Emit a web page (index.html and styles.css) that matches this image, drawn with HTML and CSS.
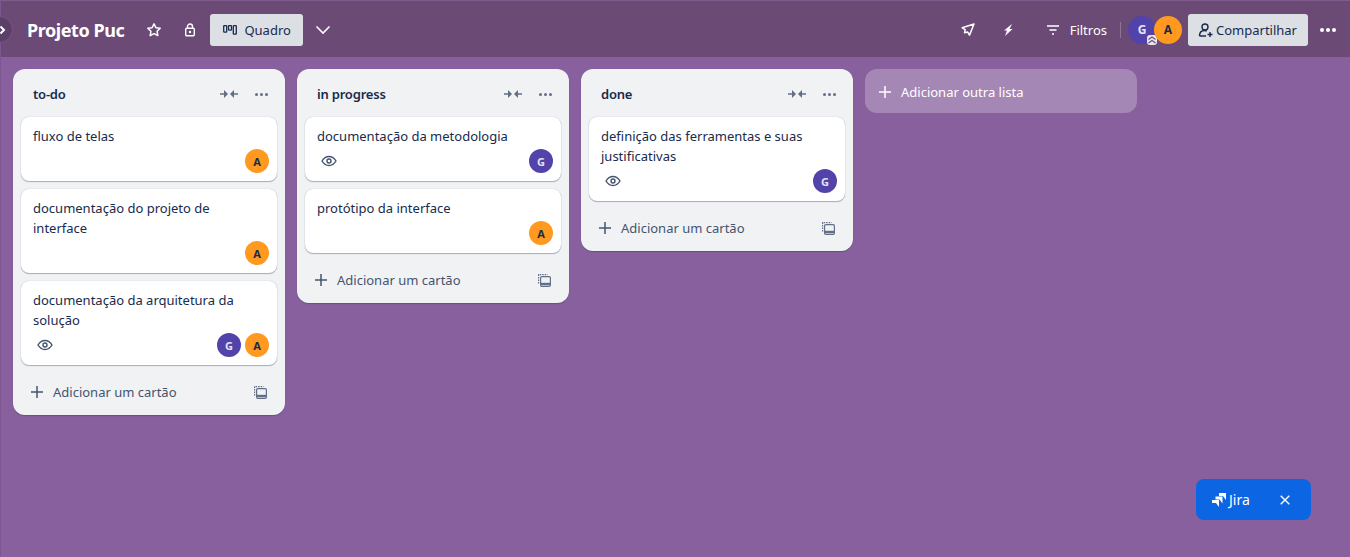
FILE: index.html
```html
<!DOCTYPE html>
<html lang="pt-BR">
<head>
  <meta charset="UTF-8" />
  <title>Projeto Puc</title>
  <link rel="stylesheet" href="styles.css">
</head>
<body>
<header class="board-bar">
  <button class="sidebar-toggle" aria-label="Expandir">
    <svg width="8" height="10" viewBox="0 0 8 10"><path d="M1.500 1.500 5 5 1.500 8.500" fill="none" stroke="#fff" stroke-width="2"/></svg>
  </button>
  <h1 class="board-title">Projeto Puc</h1>
  <span class="bar-icon star">
    <svg width="16" height="16" viewBox="0 0 16 16"><path d="M8 1.800l1.900 3.900 4.300.6-3.100 3 .7 4.300L8 11.600l-3.800 2 .7-4.300-3.100-3 4.300-.6z" fill="none" stroke="#fff" stroke-width="1.500" stroke-linejoin="round"/></svg>
  </span>
  <span class="bar-icon lock">
    <svg width="12" height="14" viewBox="0 0 12 14"><path d="M3.500 5V3.500a2.500 2.500 0 0 1 5 0V5" fill="none" stroke="#fff" stroke-width="1.400"/><rect x="1.700" y="5.200" width="8.600" height="7.600" rx="1" fill="none" stroke="#fff" stroke-width="1.400"/><circle cx="6" cy="9" r="1.200" fill="#fff"/></svg>
  </span>
  <button class="btn-light view-btn">
    <svg width="14" height="10" viewBox="0 0 14 10"><g fill="none" stroke="#172b4d" stroke-width="1.300"><rect x=".7" y=".7" width="3" height="6.500" rx=".6"/><rect x="5.500" y=".7" width="3" height="4.500" rx=".6"/><rect x="10.300" y=".7" width="3" height="8.500" rx=".6"/></g></svg>
    Quadro
  </button>
  <span class="bar-icon chevron">
    <svg width="16" height="10" viewBox="0 0 16 10"><path d="M1.500 1.500 8 8l6.500-6.500" fill="none" stroke="#fff" stroke-width="1.600"/></svg>
  </span>

  <div class="bar-right">
    <span class="bar-icon">
      <svg width="14" height="14" viewBox="0 0 14 14"><path d="M13 1 1.200 4.800l3 1.800-.7 3.200 3.200-.7 1.800 3z" fill="none" stroke="#fff" stroke-width="1.500" stroke-linejoin="round"/></svg>
    </span>
    <span class="bar-icon bolt">
      <svg width="10" height="12" viewBox="0 0 10 12"><path d="M9 0 1 6.500h3L2 12l7.500-7H6.500z" fill="#fff"/></svg>
    </span>
    <span class="bar-icon filter-icon">
      <svg width="12" height="10" viewBox="0 0 12 10"><path d="M0 1h12M2.500 5h7M5 9h2" stroke="#fff" stroke-width="1.400"/></svg>
    </span>
    <span class="filter-label">Filtros</span>
    <span class="bar-sep"></span>
    <div class="members">
      <span class="avatar avatar-g avatar-lg">G
        <span class="admin-badge">
          <svg width="10" height="10" viewBox="0 0 10 10"><path d="M1.500 4.500 5 2l3.500 2.500M1.500 8 5 5.500 8.500 8" fill="none" stroke="#6b4a76" stroke-width="1.100"/></svg>
        </span>
      </span>
      <span class="avatar avatar-a avatar-lg">A</span>
    </div>
    <button class="btn-light share-btn">
      <svg width="16" height="16" viewBox="0 0 16 16"><g fill="none" stroke="#172b4d" stroke-width="1.400"><circle cx="7" cy="5" r="3"/><path d="M1.500 14c0-3.500 2-5.500 5-5.500 1 0 1.600.2 2.200.5M1.500 14H8M12 10v5M9.500 12.500h5"/></g></svg>
      Compartilhar
    </button>
    <span class="dots dots-white"><i></i><i></i><i></i></span>
  </div>
</header>

<main class="board">
  <section class="list">
    <div class="list-head">
      <h2>to-do</h2>
      <span class="collapse-icon">
        <svg width="18" height="10" viewBox="0 0 18 10"><path d="M0 4.200h4V1l4 4-4 4V5.800H0zM18 4.200h-4V1l-4 4 4 4V5.800h4z" fill="#626f86"/></svg>
      </span>
      <span class="dots"><i></i><i></i><i></i></span>
    </div>
    <article class="card">
      <p>fluxo de telas</p>
      <div class="card-foot"><span class="avatar avatar-a">A</span></div>
    </article>
    <article class="card">
      <p>documentação do projeto de interface</p>
      <div class="card-foot"><span class="avatar avatar-a">A</span></div>
    </article>
    <article class="card">
      <p>documentação da arquitetura da solução</p>
      <div class="card-foot">
        <svg class="eye" width="16" height="12" viewBox="0 0 16 12"><path d="M1 6c1.800-3 4-4.500 7-4.500S13.200 3 15 6c-1.800 3-4 4.500-7 4.500S2.800 9 1 6z" fill="none" stroke="#44546f" stroke-width="1.400"/><circle cx="8" cy="6" r="2" fill="none" stroke="#44546f" stroke-width="1.400"/></svg>
        <span class="avatar avatar-g">G</span>
        <span class="avatar avatar-a">A</span>
      </div>
    </article>
    <div class="list-foot">
      <svg class="plus" width="12" height="12" viewBox="0 0 12 12"><path d="M6 0v12M0 6h12" stroke="#44546f" stroke-width="1.500"/></svg>
      <span>Adicionar um cartão</span>
      <svg class="template" width="13" height="13" viewBox="0 0 13 13"><g fill="none" stroke="#626f86" stroke-width="1.200"><path d="M.6 9.500V.6h9" stroke-dasharray="1.500 1"/><rect x="2.600" y="2.600" width="9.800" height="9.800" rx="1.200"/><path d="M3 10h9" stroke-width="2.400"/></g></svg>
    </div>
  </section>

  <section class="list">
    <div class="list-head">
      <h2>in progress</h2>
      <span class="collapse-icon">
        <svg width="18" height="10" viewBox="0 0 18 10"><path d="M0 4.200h4V1l4 4-4 4V5.800H0zM18 4.200h-4V1l-4 4 4 4V5.800h4z" fill="#626f86"/></svg>
      </span>
      <span class="dots"><i></i><i></i><i></i></span>
    </div>
    <article class="card">
      <p>documentação da metodologia</p>
      <div class="card-foot">
        <svg class="eye" width="16" height="12" viewBox="0 0 16 12"><path d="M1 6c1.800-3 4-4.500 7-4.500S13.200 3 15 6c-1.800 3-4 4.500-7 4.500S2.800 9 1 6z" fill="none" stroke="#44546f" stroke-width="1.400"/><circle cx="8" cy="6" r="2" fill="none" stroke="#44546f" stroke-width="1.400"/></svg>
        <span class="avatar avatar-g">G</span>
      </div>
    </article>
    <article class="card">
      <p>protótipo da interface</p>
      <div class="card-foot"><span class="avatar avatar-a">A</span></div>
    </article>
    <div class="list-foot">
      <svg class="plus" width="12" height="12" viewBox="0 0 12 12"><path d="M6 0v12M0 6h12" stroke="#44546f" stroke-width="1.500"/></svg>
      <span>Adicionar um cartão</span>
      <svg class="template" width="13" height="13" viewBox="0 0 13 13"><g fill="none" stroke="#626f86" stroke-width="1.200"><path d="M.6 9.500V.6h9" stroke-dasharray="1.500 1"/><rect x="2.600" y="2.600" width="9.800" height="9.800" rx="1.200"/><path d="M3 10h9" stroke-width="2.400"/></g></svg>
    </div>
  </section>

  <section class="list">
    <div class="list-head">
      <h2>done</h2>
      <span class="collapse-icon">
        <svg width="18" height="10" viewBox="0 0 18 10"><path d="M0 4.200h4V1l4 4-4 4V5.800H0zM18 4.200h-4V1l-4 4 4 4V5.800h4z" fill="#626f86"/></svg>
      </span>
      <span class="dots"><i></i><i></i><i></i></span>
    </div>
    <article class="card">
      <p>definição das ferramentas e suas justificativas</p>
      <div class="card-foot">
        <svg class="eye" width="16" height="12" viewBox="0 0 16 12"><path d="M1 6c1.800-3 4-4.500 7-4.500S13.200 3 15 6c-1.800 3-4 4.500-7 4.500S2.800 9 1 6z" fill="none" stroke="#44546f" stroke-width="1.400"/><circle cx="8" cy="6" r="2" fill="none" stroke="#44546f" stroke-width="1.400"/></svg>
        <span class="avatar avatar-g">G</span>
      </div>
    </article>
    <div class="list-foot">
      <svg class="plus" width="12" height="12" viewBox="0 0 12 12"><path d="M6 0v12M0 6h12" stroke="#44546f" stroke-width="1.500"/></svg>
      <span>Adicionar um cartão</span>
      <svg class="template" width="13" height="13" viewBox="0 0 13 13"><g fill="none" stroke="#626f86" stroke-width="1.200"><path d="M.6 9.500V.6h9" stroke-dasharray="1.500 1"/><rect x="2.600" y="2.600" width="9.800" height="9.800" rx="1.200"/><path d="M3 10h9" stroke-width="2.400"/></g></svg>
    </div>
  </section>

  <button class="add-list">
    <svg width="12" height="12" viewBox="0 0 12 12"><path d="M6 0v12M0 6h12" stroke="#fff" stroke-width="1.500"/></svg>
    Adicionar outra lista
  </button>
</main>

<aside class="jira-pill">
  <svg width="14" height="14" viewBox="0 0 14 14"><g fill="#fff"><path d="M7 0h7v7l-3-4H7z"/><path d="M3.500 3.500h7v7l-3-4h-4z"/><path d="M0 7h7v7L4 10H0z"/></g></svg>
  <span>Jira</span>
  <svg class="jira-close" width="10" height="10" viewBox="0 0 10 10"><path d="M.7.700l8.600 8.600M9.300.7.700 9.300" stroke="#fff" stroke-width="1.400"/></svg>
</aside>
</body>
</html>
```

FILE: styles.css
```css
* {
  box-sizing: border-box;
}
html, body {
  height: 100%;
}
body {
  margin: 0;
  font-family: "Noto Sans", "Open Sans", sans-serif;
  font-size: 13px;
  color: #172b4d;
  background: #89609e;
  overflow: hidden;
  border-left: 1px solid #7b5690;
}

/* Top bar */
.board-bar {
  display: flex;
  align-items: center;
  height: 57px;
  padding: 1px 0 0 26px;
  background: #6b4a76;
  border-top: 1px solid #7f5b8e;
  color: #fff;
}
.sidebar-toggle {
  position: absolute;
  left: -14px;
  top: 16px;
  width: 27px;
  height: 27px;
  padding: 0 0 0 12px;
  display: flex;
  align-items: center;
  border: 1px solid #77558a;
  border-radius: 50%;
  background: #5a3f66;
}
.board-title {
  margin: 0;
  font-size: 18px;
  font-weight: 700;
  line-height: 32px;
  letter-spacing: -0.43px;
}
.bar-icon {
  display: flex;
  align-items: center;
  justify-content: center;
}
.star {
  margin-left: 22px;
}
.lock {
  margin-left: 22px;
}
.btn-light {
  display: flex;
  align-items: center;
  height: 32px;
  border: none;
  border-radius: 3px;
  background: #dcdfe4;
  color: #172b4d;
  font-family: inherit;
  font-size: 13px;
}
.view-btn {
  width: 93px;
  margin-left: 14px;
  padding: 0 0 0 13px;
  gap: 7px;
}
.chevron {
  margin-left: 12px;
}
.bar-right {
  display: flex;
  align-items: center;
  margin-left: auto;
}
.bolt {
  margin-left: 28px;
}
.filter-icon {
  margin-left: 34px;
}
.filter-label {
  margin-left: 11px;
  color: #fff;
}
.bar-sep {
  width: 1px;
  height: 16px;
  margin: 0 7px 0 13px;
  background: #8e7399;
}
.members {
  display: flex;
}
.avatar {
  display: flex;
  align-items: center;
  justify-content: center;
  flex: none;
  width: 24px;
  height: 24px;
  border-radius: 50%;
  font-size: 11px;
  font-weight: 700;
}
.avatar-lg {
  position: relative;
  width: 28px;
  height: 28px;
  font-size: 12px;
}
.avatar-lg + .avatar-lg {
  margin-left: -2px;
}
.avatar-g {
  background: #5243aa;
  color: #e6e3f5;
}
.avatar-a {
  background: #ff991f;
  color: #172b4d;
}
.admin-badge {
  position: absolute;
  right: -1px;
  bottom: -1px;
  display: flex;
  width: 10px;
  height: 10px;
  background: #e9e6f2;
  border-radius: 3px;
}
.share-btn {
  width: 120px;
  margin-left: 6px;
  padding: 0 0 0 10px;
  gap: 2px;
}
.dots {
  display: flex;
  gap: 2px;
}
.dots i {
  width: 3px;
  height: 3px;
  border-radius: 50%;
  background: #626f86;
}
.dots-white {
  margin: 0 14px 0 12px;
}
.dots-white i {
  width: 4px;
  height: 4px;
  background: #fff;
}

/* Board */
.board {
  display: flex;
  align-items: flex-start;
  gap: 12px;
  padding: 12px 0 0 12px;
}
.list {
  flex: none;
  width: 272px;
  padding: 0 8px;
  background: #f1f2f4;
  border-radius: 12px;
  box-shadow: 0 1px 1px rgba(9, 30, 66, 0.25);
}
.list-head {
  display: flex;
  align-items: center;
  height: 48px;
  padding: 2px 9px 0 12px;
}
.list-head h2 {
  flex: 1;
  margin: 0;
  font-size: 13px;
  font-weight: 600;
  letter-spacing: -0.2px;
}
.collapse-icon {
  display: flex;
  margin-right: 17px;
}
.card {
  margin-bottom: 8px;
  padding: 9px 8px 8px 12px;
  background: #fff;
  border-radius: 8px;
  box-shadow: 0 1px 1px rgba(9, 30, 66, 0.3), 0 0 1px rgba(9, 30, 66, 0.3);
}
.card p {
  margin: 0;
  padding-right: 20px;
  line-height: 20px;
}
.card-foot {
  display: flex;
  align-items: center;
  justify-content: flex-end;
  gap: 4px;
  margin-top: 3px;
}
.eye {
  margin: 0 auto 0 4px;
}
.list .card:last-of-type {
  margin-bottom: 0;
}
.list-foot {
  display: flex;
  align-items: center;
  height: 50px;
  padding: 4px 10px 0 10px;
  color: #44546f;
}
.plus {
  margin-right: 10px;
}
.list-foot span {
  flex: 1;
}
.add-list {
  display: flex;
  align-items: center;
  gap: 10px;
  flex: none;
  width: 272px;
  height: 44px;
  padding: 1px 14px 0;
  border: none;
  border-radius: 12px;
  background: #a587b5;
  color: #fff;
  font-family: inherit;
  font-size: 13px;
}

/* Jira pill */
.jira-pill {
  position: absolute;
  left: 1196px;
  top: 479px;
  display: flex;
  align-items: center;
  width: 115px;
  height: 41px;
  padding: 0 21px 0 16px;
  background: #0c66e4;
  border-radius: 8px;
  color: #fff;
  font-size: 14px;
  gap: 3px;
}
.jira-close {
  margin-left: auto;
}
```
